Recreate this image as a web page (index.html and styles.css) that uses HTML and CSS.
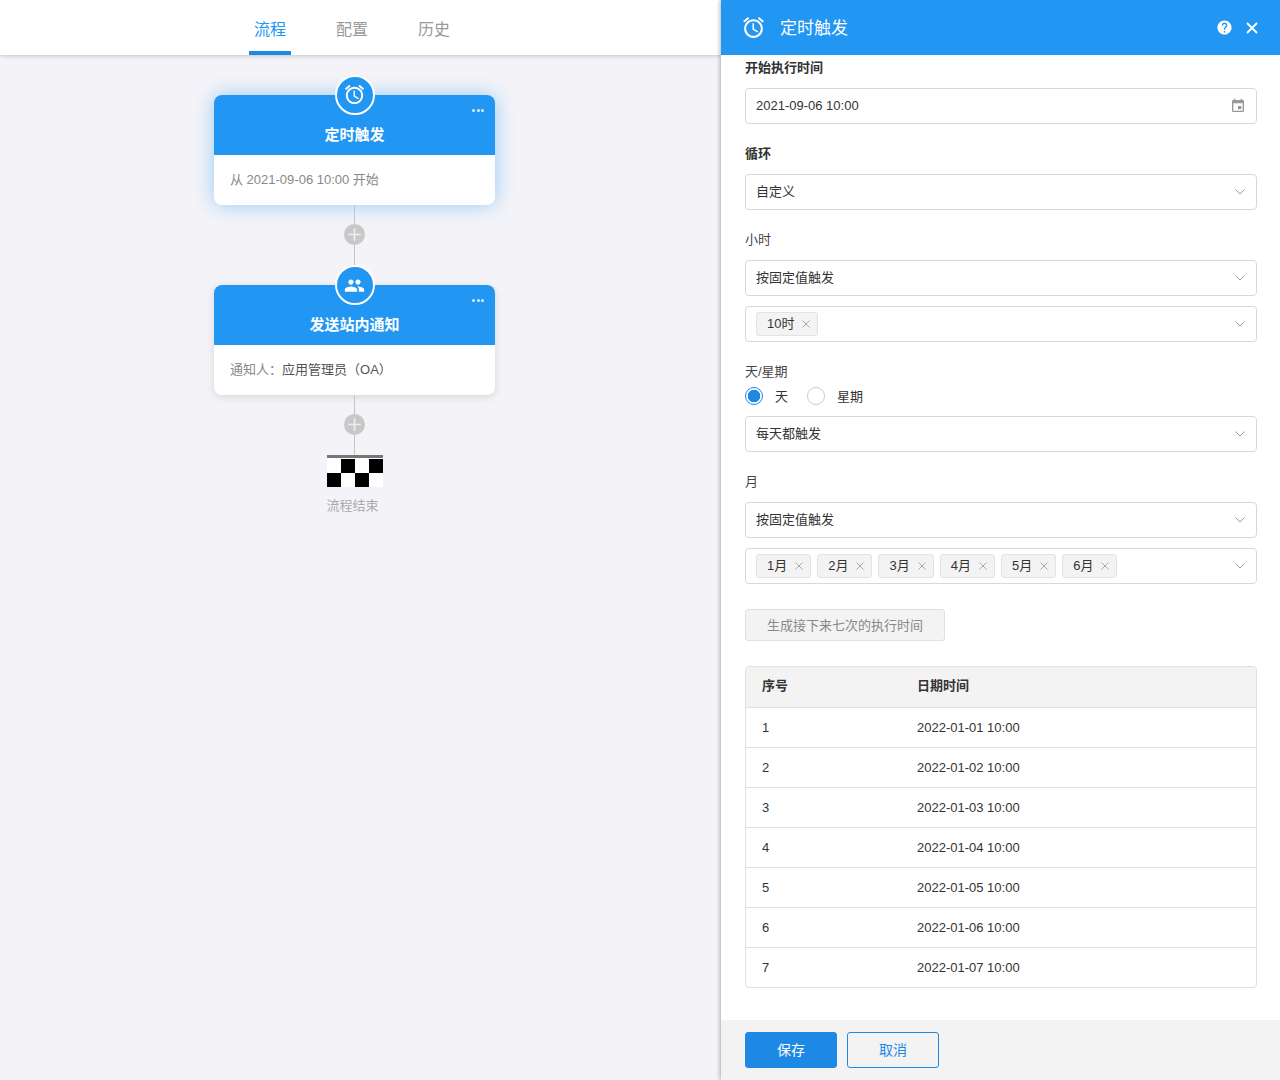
FILE: index.html
```html
<!DOCTYPE html>
<html lang="zh-CN">
<head>
<meta charset="utf-8">
<title>定时触发</title>
<link rel="stylesheet" href="styles.css">
</head>
<body>
<div class="app">
  <main class="stage">
    <nav class="tabs">
      <a class="tab active">流程</a>
      <a class="tab">配置</a>
      <a class="tab">历史</a>
    </nav>
    <div class="flow">
      <section class="node node-active">
        <span class="node-badge"><svg viewBox="0 0 24 24" class="badge-icon"><path d="M22 5.72l-4.6-3.86-1.29 1.53 4.6 3.86L22 5.72zM7.88 3.39L6.6 1.86 2 5.71l1.29 1.53 4.59-3.85zM12.5 8H11v6l4.75 2.85.75-1.23-4-2.37V8zM12 4c-4.97 0-9 4.03-9 9s4.03 9 9 9 9-4.03 9-9-4.03-9-9-9zm0 16c-3.87 0-7-3.13-7-7s3.13-7 7-7 7 3.13 7 7-3.13 7-7 7z"/></svg></span>
        <span class="node-more"><i></i><i></i><i></i></span>
        <h3 class="node-title">定时触发</h3>
        <p class="node-body">从 2021-09-06 10:00 开始</p>
      </section>
      <div class="connector"><span class="plus"><svg viewBox="0 0 20 20"><path d="M10 4v12M4 10h12"/></svg></span></div>
      <section class="node node-next">
        <span class="node-badge"><svg viewBox="0 0 24 24" class="badge-icon people"><path d="M16 11c1.66 0 2.99-1.34 2.99-3S17.66 5 16 5c-1.66 0-3 1.34-3 3s1.34 3 3 3zm-8 0c1.66 0 2.99-1.34 2.99-3S9.66 5 8 5C6.34 5 5 6.34 5 8s1.34 3 3 3zm0 2c-2.33 0-7 1.17-7 3.5V19h14v-2.5c0-2.33-4.67-3.5-7-3.5zm8 0c-.29 0-.62.02-.97.05 1.16.84 1.97 1.97 1.97 3.45V19h6v-2.5c0-2.33-4.67-3.5-7-3.5z"/></svg></span>
        <span class="node-more"><i></i><i></i><i></i></span>
        <h3 class="node-title">发送站内通知</h3>
        <p class="node-body">通知人：<span class="node-strong">应用管理员（OA）</span></p>
      </section>
      <div class="connector"><span class="plus"><svg viewBox="0 0 20 20"><path d="M10 4v12M4 10h12"/></svg></span></div>
      <svg class="finish" viewBox="0 0 56 32" width="56" height="32"><rect width="56" height="32" fill="#fff"/><rect width="56" height="3" fill="#777"/><path d="M14 4h14v14H14zM42 4h14v14H42zM0 18h14v14H0zM28 18h14v14H28z"/></svg>
      <div class="finish-label">流程结束</div>
    </div>
  </main>

  <aside class="panel">
    <header class="panel-head">
      <svg viewBox="0 0 24 24" class="head-clock"><path d="M22 5.72l-4.6-3.86-1.29 1.53 4.6 3.86L22 5.72zM7.88 3.39L6.6 1.86 2 5.71l1.29 1.53 4.59-3.85zM12.5 8H11v6l4.75 2.85.75-1.23-4-2.37V8zM12 4c-4.97 0-9 4.03-9 9s4.03 9 9 9 9-4.03 9-9-4.03-9-9-9zm0 16c-3.87 0-7-3.13-7-7s3.13-7 7-7 7 3.13 7 7-3.13 7-7 7z"/></svg>
      <h2 class="panel-title">定时触发</h2>
      <svg viewBox="0 0 24 24" class="head-help"><path d="M12 2C6.48 2 2 6.48 2 12s4.48 10 10 10 10-4.48 10-10S17.52 2 12 2zm1 17h-2v-2h2v2zm2.07-7.75l-.9.92C13.45 12.9 13 13.5 13 15h-2v-.5c0-1.1.45-2.1 1.17-2.83l1.24-1.26c.37-.36.59-.86.59-1.41 0-1.1-.9-2-2-2s-2 .9-2 2H8c0-2.21 1.79-4 4-4s4 1.79 4 4c0 .88-.36 1.68-.93 2.25z"/></svg>
      <svg viewBox="0 0 12 12" class="head-close"><path d="M1 1l10 10M11 1L1 11"/></svg>
    </header>

    <div class="panel-body">
      <div class="field">
        <div class="field-label strong">开始执行时间</div>
        <div class="control"><span class="ctl-date">2021-09-06 10:00</span><svg viewBox="0 0 24 24" class="cal"><path d="M17 12h-5v5h5v-5zM16 1v2H8V1H6v2H5c-1.11 0-1.99.9-1.99 2L3 19c0 1.1.89 2 2 2h14c1.1 0 2-.9 2-2V5c0-1.1-.9-2-2-2h-1V1h-2zm3 18H5V8h14v11z"/></svg></div>
      </div>
      <div class="field">
        <div class="field-label strong">循环</div>
        <div class="control"><span class="ctl-text">自定义</span><svg viewBox="0 0 10 6" class="chev"><path d="M.5.5L5 5 9.5.5"/></svg></div>
      </div>
      <div class="field">
        <div class="field-label">小时</div>
        <div class="control"><span class="ctl-text">按固定值触发</span><svg viewBox="0 0 10 6" class="chev"><path d="M.5.5L5 5 9.5.5"/></svg></div>
        <div class="control"><div class="tags"><span class="tag"><span class="tag-text">10时</span><svg viewBox="0 0 8 8" class="tag-x"><path d="M.5.5l7 7M7.5.5l-7 7"/></svg></span></div><svg viewBox="0 0 10 6" class="chev"><path d="M.5.5L5 5 9.5.5"/></svg></div>
      </div>
      <div class="field">
        <div class="field-label tight">天/星期</div>
        <div class="radios">
          <span class="radio checked"></span><span class="radio-text">天</span>
          <span class="radio"></span><span class="radio-text">星期</span>
        </div>
        <div class="control"><span class="ctl-text">每天都触发</span><svg viewBox="0 0 10 6" class="chev"><path d="M.5.5L5 5 9.5.5"/></svg></div>
      </div>
      <div class="field">
        <div class="field-label">月</div>
        <div class="control"><span class="ctl-text">按固定值触发</span><svg viewBox="0 0 10 6" class="chev"><path d="M.5.5L5 5 9.5.5"/></svg></div>
        <div class="control"><div class="tags">
          <span class="tag"><span class="tag-text">1月</span><svg viewBox="0 0 8 8" class="tag-x"><path d="M.5.5l7 7M7.5.5l-7 7"/></svg></span>
          <span class="tag"><span class="tag-text">2月</span><svg viewBox="0 0 8 8" class="tag-x"><path d="M.5.5l7 7M7.5.5l-7 7"/></svg></span>
          <span class="tag"><span class="tag-text">3月</span><svg viewBox="0 0 8 8" class="tag-x"><path d="M.5.5l7 7M7.5.5l-7 7"/></svg></span>
          <span class="tag"><span class="tag-text">4月</span><svg viewBox="0 0 8 8" class="tag-x"><path d="M.5.5l7 7M7.5.5l-7 7"/></svg></span>
          <span class="tag"><span class="tag-text">5月</span><svg viewBox="0 0 8 8" class="tag-x"><path d="M.5.5l7 7M7.5.5l-7 7"/></svg></span>
          <span class="tag"><span class="tag-text">6月</span><svg viewBox="0 0 8 8" class="tag-x"><path d="M.5.5l7 7M7.5.5l-7 7"/></svg></span>
        </div><svg viewBox="0 0 10 6" class="chev"><path d="M.5.5L5 5 9.5.5"/></svg></div>
      </div>
      <button class="gen-btn" type="button">生成接下来七次的执行时间</button>
      <div class="table">
        <div class="row row-head"><div>序号</div><div>日期时间</div></div>
        <div class="row"><div>1</div><div>2022-01-01 10:00</div></div>
        <div class="row"><div>2</div><div>2022-01-02 10:00</div></div>
        <div class="row"><div>3</div><div>2022-01-03 10:00</div></div>
        <div class="row"><div>4</div><div>2022-01-04 10:00</div></div>
        <div class="row"><div>5</div><div>2022-01-05 10:00</div></div>
        <div class="row"><div>6</div><div>2022-01-06 10:00</div></div>
        <div class="row"><div>7</div><div>2022-01-07 10:00</div></div>
      </div>
    </div>

    <footer class="panel-foot">
      <button class="btn btn-primary" type="button">保存</button>
      <button class="btn btn-ghost" type="button">取消</button>
    </footer>
  </aside>
</div>
</body>
</html>
```
FILE: styles.css
```css
* { box-sizing: border-box; }
html, body { margin: 0; height: 100%; }
body {
  font-family: "Liberation Sans", "Noto Sans CJK SC", sans-serif;
  font-size: 13px;
  color: #333;
  background: #f4f4f8;
  overflow: hidden;
}
.app { display: flex; height: 1080px; }

.stage { flex: 1; min-width: 0; }
.tabs {
  height: 55px;
  background: #fff;
  box-shadow: 0 1px 4px rgba(0, 0, 0, .2);
  display: flex;
  gap: 40px;
  padding-left: 249px;
}
.tab {
  width: 42px;
  height: 55px;
  line-height: 60px;
  text-align: center;
  font-size: 16px;
  color: #999;
}
.tab.active { color: #2196f3; border-bottom: 4px solid #1e88e5; }

.flow {
  width: 281px;
  margin: 40px 0 0 214px;
  display: flex;
  flex-direction: column;
  align-items: center;
}
.node {
  position: relative;
  width: 281px;
  background: #fff;
  border-radius: 8px;
}
.node-active { box-shadow: 0 0 20px rgba(33, 150, 243, .45); }
.node-next { margin-top: 20px; box-shadow: 0 2px 8px rgba(0, 0, 0, .12); }
.node-badge {
  position: absolute;
  left: 121px;
  top: -20px;
  width: 40px;
  height: 40px;
  border-radius: 50%;
  background: #2196f3;
  border: 2px solid #fff;
  display: flex;
  align-items: center;
  justify-content: center;
}
.badge-icon { width: 23px; height: 23px; fill: #fff; margin: 0 1px 1px 0; }
.badge-icon.people { width: 21px; height: 21px; margin: 0 1px 0 0; }
.node-more {
  position: absolute;
  right: 11px;
  top: 14px;
  display: flex;
  gap: 1.5px;
}
.node-more i { width: 3px; height: 3px; border-radius: 50%; background: #dbeeff; }
.node-title {
  margin: 0;
  height: 60px;
  padding-top: 30px;
  line-height: 20px;
  text-align: center;
  font-size: 15px;
  font-weight: 700;
  color: #fff;
  background: #2196f3;
  border-radius: 8px 8px 0 0;
}
.node-body {
  margin: 0;
  height: 50px;
  line-height: 49px;
  padding-left: 16px;
  font-size: 13px;
  color: #888;
}
.node-strong { color: #555; }
.connector {
  position: relative;
  width: 1px;
  height: 60px;
  background: #c4c4c4;
}
.plus {
  position: absolute;
  left: -10px;
  top: 19px;
  width: 21px;
  height: 21px;
  border-radius: 50%;
  background: #c8c8c8;
}
.plus svg { display: block; width: 21px; height: 21px; stroke: #eee; stroke-width: 1.6; fill: none; }
.finish { display: block; }
.finish-label {
  margin-top: 9px;
  margin-right: 4px;
  line-height: 20px;
  color: #aaa;
}

.panel {
  width: 559px;
  height: 1080px;
  display: flex;
  flex-direction: column;
  background: #fff;
  box-shadow: -1px 0 4px rgba(0, 0, 0, .3);
}
.panel-head {
  flex: none;
  height: 55px;
  background: #2196f3;
  display: flex;
  align-items: center;
  padding: 0 21px 0 20px;
  color: #fff;
}
.head-clock { width: 25px; height: 25px; fill: #fff; margin-right: 14px; }
.panel-title { flex: 1; margin: 0 0 2px; font-size: 17px; font-weight: 400; color: #fff; }
.head-help { width: 17px; height: 17px; fill: #fff; margin-right: 13px; }
.head-close { width: 12px; height: 12px; stroke: #fff; stroke-width: 1.8; fill: none; margin-right: 1px; }

.panel-body {
  flex: 1;
  min-height: 0;
  padding: 2px 23px 0 24px;
}
.field { display: flex; flex-direction: column; gap: 10px; margin-bottom: 19px; }
.field-label { height: 20px; line-height: 21px; margin-bottom: 1px; color: #444; }
.field-label.strong { font-weight: 700; color: #333; }
.field-label.tight { margin-bottom: -5px; }
.control {
  height: 36px;
  border: 1px solid #d8d8d8;
  border-radius: 4px;
  background: #fff;
  display: flex;
  align-items: center;
  justify-content: space-between;
  padding: 0 11px 0 10px;
}
.ctl-text { margin-bottom: 4px; }
.ctl-date { margin-bottom: 2px; }
.chev { width: 10px; height: 6px; stroke: #999; stroke-width: 1; fill: none; }
.cal { width: 16px; height: 16px; fill: #999; margin-right: -1px; }
.tags { display: flex; gap: 6px; }
.tag {
  height: 24px;
  padding: 0 7px 0 10px;
  display: flex;
  align-items: center;
  gap: 8px;
  background: #f3f3f3;
  border: 1px solid #e3e3e3;
  border-radius: 3px;
}
.tag-text { margin-bottom: 4px; }
.tag-x { width: 8px; height: 8px; stroke: #aaa; stroke-width: 1; fill: none; }
.radios { display: flex; align-items: center; height: 20px; }
.radio {
  width: 18px;
  height: 18px;
  border: 1px solid #ccc;
  border-radius: 50%;
  margin-right: 12px;
  background: #fff;
}
.radio.checked {
  border-color: #1e88e5;
  background: radial-gradient(circle, #1e88e5 0, #1e88e5 6px, #fff 6.6px);
}
.radio-text { margin: 0 19px 2px 0; }

.gen-btn {
  display: block;
  width: 200px;
  height: 32px;
  margin-top: 25px;
  padding: 0 0 2px;
  font: inherit;
  color: #888;
  background: #f3f3f3;
  border: 1px solid #e0e0e0;
  border-radius: 3px;
}
.table {
  margin-top: 25px;
  border: 1px solid #e0e0e0;
  border-radius: 4px;
  overflow: hidden;
}
.row {
  display: grid;
  grid-template-columns: 155px 1fr;
  height: 40px;
  align-items: center;
  padding-bottom: 1px;
  border-top: 1px solid #e0e0e0;
}
.row > div { padding-left: 16px; }
.row-head {
  padding-bottom: 6px;
  border-top: 0;
  background: #f3f3f3;
  font-weight: 700;
}

.panel-foot {
  flex: none;
  height: 60px;
  background: #f3f3f3;
  display: flex;
  gap: 10px;
  padding: 12px 24px;
}
.btn {
  width: 92px;
  height: 36px;
  padding: 0 0 2px;
  font: inherit;
  font-size: 14px;
  border-radius: 3px;
  border: 1px solid #1e88e5;
}
.btn-primary { background: #1e88e5; color: #fff; }
.btn-ghost { background: transparent; color: #1e88e5; }
```
